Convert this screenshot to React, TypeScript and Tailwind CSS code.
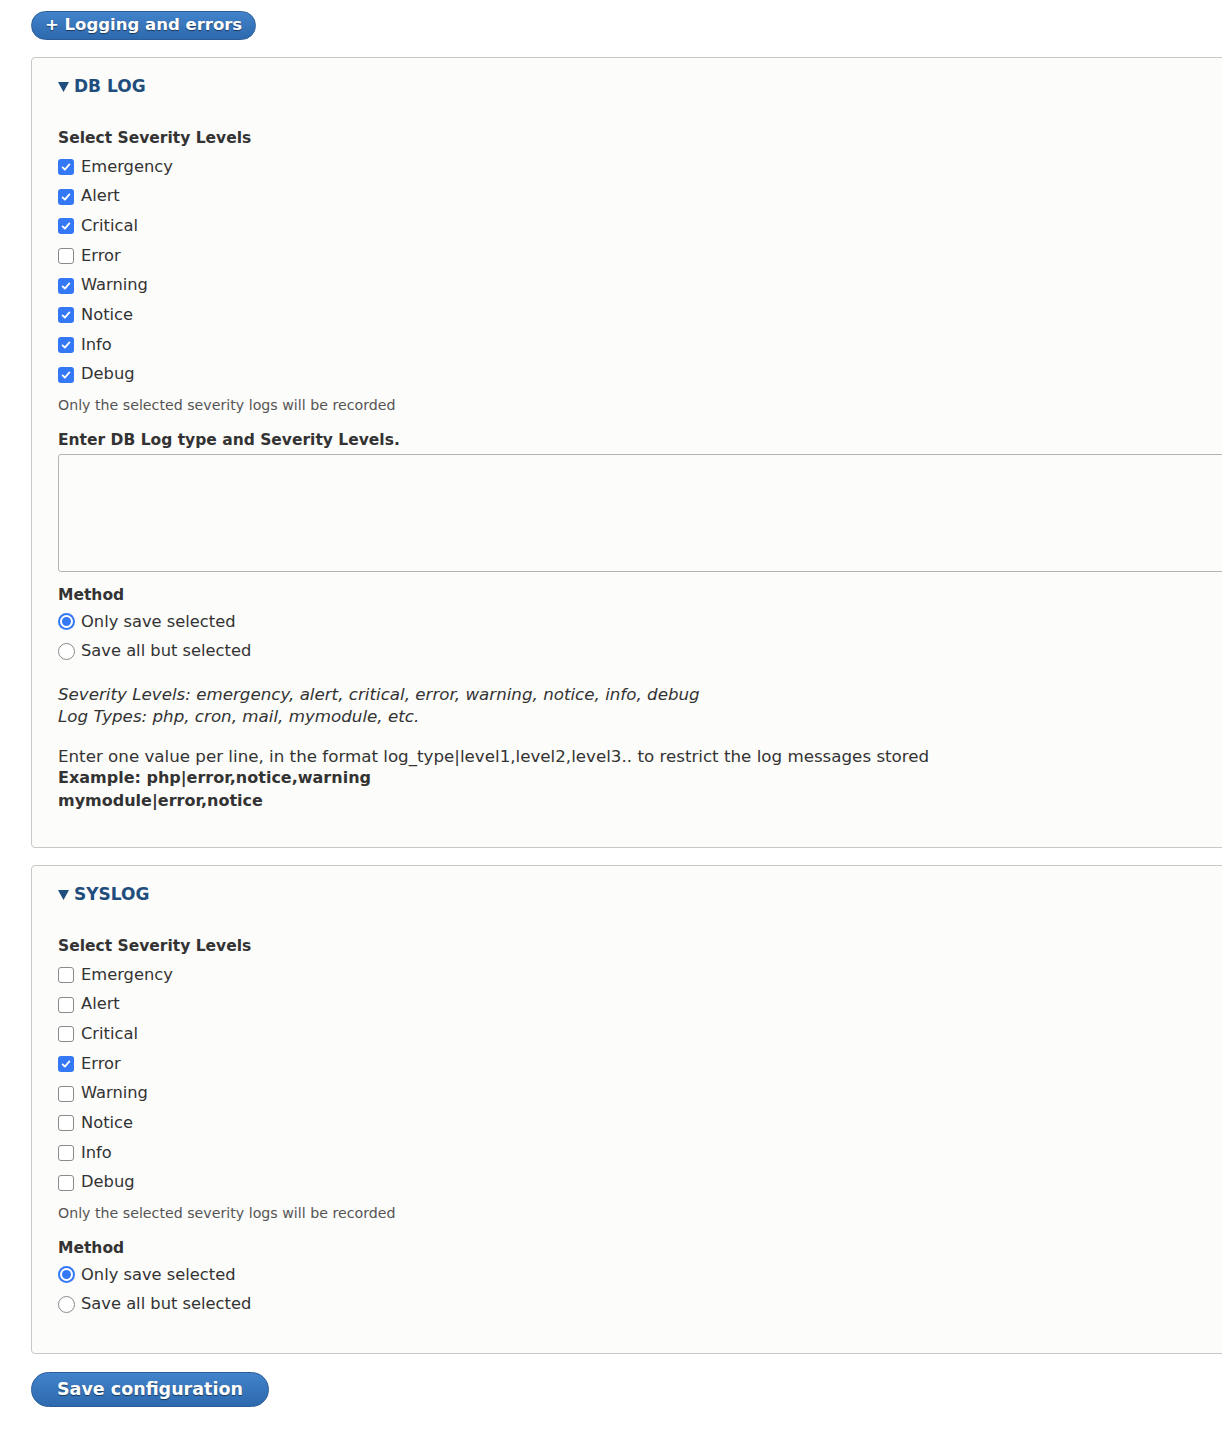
import React from "react";

const font = { fontFamily: '"DejaVu Sans", Verdana, sans-serif' };

function CheckBox(props: { checked: boolean }) {
  if (props.checked) {
    return (
      <span className="w-[16px] h-[16px] rounded-[3px] bg-[#3478f6] flex items-center justify-center shrink-0">
        <svg viewBox="0 0 16 16" className="w-[12px] h-[12px]" fill="none" stroke="white" strokeWidth="2.4" strokeLinecap="round" strokeLinejoin="round">
          <path d="M3.5 8.5l3 3 6-7" />
        </svg>
      </span>
    );
  }
  return <span className="w-[16px] h-[16px] rounded-[3px] border border-[#8a8a8a] bg-white shrink-0" />;
}

function Radio(props: { checked: boolean }) {
  if (props.checked) {
    return (
      <span className="w-[17px] h-[17px] rounded-full bg-[#3478f6] flex items-center justify-center shrink-0">
        <span className="w-[13px] h-[13px] rounded-full bg-white flex items-center justify-center">
          <span className="w-[9px] h-[9px] rounded-full bg-[#3478f6]" />
        </span>
      </span>
    );
  }
  return <span className="w-[17px] h-[17px] rounded-full border border-[#8a8a8a] bg-white shrink-0" />;
}

const levels = ["Emergency", "Alert", "Critical", "Error", "Warning", "Notice", "Info", "Debug"];

function Levels(props: { checked: boolean[] }) {
  return (
    <div className="mt-[4px]">
      {levels.map((l, i) => (
        <label key={l} className="flex items-center h-[29.7px] gap-[7px] text-[16.3px] text-[#333]">
          <CheckBox checked={props.checked[i]} />
          <span>{l}</span>
        </label>
      ))}
    </div>
  );
}

function Legend(props: { title: string }) {
  return (
    <div className="h-[20px] flex items-center text-[17px] font-bold text-[#1f4d7d]">
      <svg viewBox="0 0 11 10" className="w-[11px] h-[10px] mr-[5px]" fill="#1f4d7d">
        <path d="M0 0h11L5.5 10z" />
      </svg>
      <span>{props.title}</span>
    </div>
  );
}

function Method() {
  return (
    <>
      <div className="h-[20px] leading-[20px] font-bold text-[15.5px] text-[#333]">Method</div>
      <div className="mt-[2.5px]">
        <label className="flex items-center h-[29.5px] gap-[6px] text-[16.3px] text-[#333]">
          <Radio checked={true} />
          <span>Only save selected</span>
        </label>
        <label className="flex items-center h-[29.5px] gap-[6px] text-[16.3px] text-[#333]">
          <Radio checked={false} />
          <span>Save all but selected</span>
        </label>
      </div>
    </>
  );
}

export default function App() {
  return (
    <div className="bg-white min-h-[1438px] overflow-hidden pt-[11px] pl-[31px]" style={font}>
      <button className="h-[29px] px-[13px] rounded-full bg-gradient-to-b from-[#4283cb] to-[#2d69ad] border border-[#2a5d9a] text-white font-bold text-[16.5px] [text-shadow:0_1px_1px_rgba(0,0,0,0.5)]">
        + Logging and errors
      </button>

      <div className="mt-[17px] w-[1240px] border border-[#c8c8c8] rounded-[4px] bg-[#fcfcfa] pt-[19px] pl-[26px] pb-[35px]">
        <Legend title="DB LOG" />
        <div className="mt-[31px] h-[20px] leading-[20px] font-bold text-[15.5px] text-[#333]">Select Severity Levels</div>
        <Levels checked={[true, true, true, false, true, true, true, true]} />
        <div className="mt-[6px] h-[18px] leading-[18px] text-[14.2px] text-[#555]">Only the selected severity logs will be recorded</div>
        <div className="mt-[16px] h-[20px] leading-[20px] font-bold text-[15.5px] text-[#333]">Enter DB Log type and Severity Levels.</div>
        <textarea className="mt-[4px] block w-[1200px] h-[118px] border border-[#b4b4b4] rounded-[3px] bg-[#fcfcfa] resize-none" />
        <div className="mt-[13px]">
          <Method />
        </div>
        <div className="mt-[16.5px] text-[16.7px] italic text-[#333] leading-[22px]">
          <div>Severity Levels: emergency, alert, critical, error, warning, notice, info, debug</div>
          <div>Log Types: php, cron, mail, mymodule, etc.</div>
        </div>
        <div className="mt-[18px] text-[16.7px] text-[#333] leading-[22.5px]">
          <div>Enter one value per line, in the format log_type|level1,level2,level3.. to restrict the log messages stored</div>
          <div className="font-bold text-[16px]">Example: php|error,notice,warning</div>
          <div className="font-bold text-[16px]">mymodule|error,notice</div>
        </div>
      </div>

      <div className="mt-[17px] w-[1240px] border border-[#c8c8c8] rounded-[4px] bg-[#fcfcfa] pt-[19px] pl-[26px] pb-[34px]">
        <Legend title="SYSLOG" />
        <div className="mt-[31px] h-[20px] leading-[20px] font-bold text-[15.5px] text-[#333]">Select Severity Levels</div>
        <Levels checked={[false, false, false, true, false, false, false, false]} />
        <div className="mt-[6px] h-[18px] leading-[18px] text-[14.2px] text-[#555]">Only the selected severity logs will be recorded</div>
        <div className="mt-[16px]">
          <Method />
        </div>
      </div>

      <button className="mt-[18px] h-[35px] px-[25px] rounded-full bg-gradient-to-b from-[#4283cb] to-[#2d69ad] border border-[#2a5d9a] text-white font-bold text-[17.5px] [text-shadow:0_1px_1px_rgba(0,0,0,0.5)]">
        Save configuration
      </button>
    </div>
  );
}
